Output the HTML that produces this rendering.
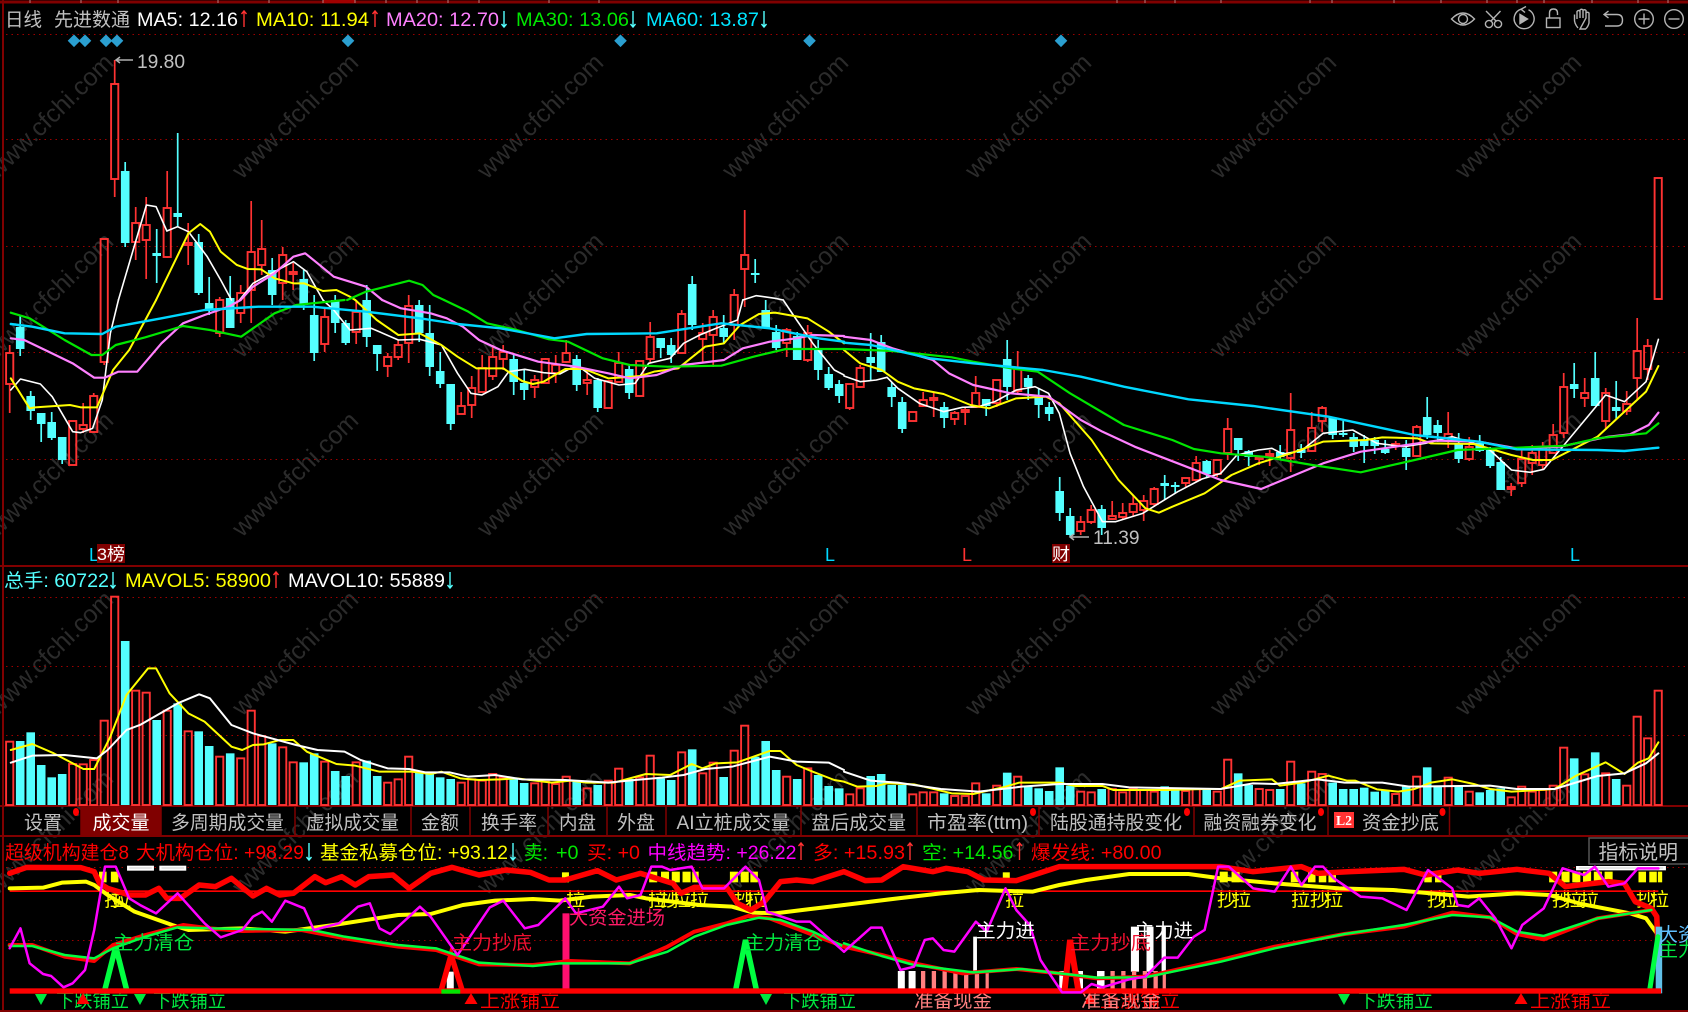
<!DOCTYPE html>
<html><head><meta charset="utf-8"><title>K线</title>
<style>
html,body{margin:0;padding:0;background:#000;width:1688px;height:1012px;overflow:hidden}
svg{display:block;position:absolute;left:0;top:0}
text{font-family:"Liberation Sans","Noto Sans CJK SC",sans-serif;font-size:19px}
.wm text{font-size:25px;fill:#2b2b2b}
polyline{fill:none;vector-effect:non-scaling-stroke;stroke-linejoin:round;stroke-linecap:round}
.w{stroke:#fff;stroke-width:1.6}.y{stroke:#ff0;stroke-width:2}.p{stroke:#ff80ff;stroke-width:2.2}.g{stroke:#00e600;stroke-width:2.2}.c{stroke:#00d8ff;stroke-width:2.4}
.icon{fill:none;stroke:#b4b4b4;stroke-width:1.4}
</style></head><body>
<svg id="s" width="1688" height="1012" viewBox="0 0 1688 1012" xmlns="http://www.w3.org/2000/svg">
<rect width="1688" height="1012" fill="#000"/>
<g class="wm" id="wm" transform="translate(5,5)">
<text transform="translate(-8,175) rotate(-44.5)">www.cfchi.com</text><text transform="translate(237,175) rotate(-44.5)">www.cfchi.com</text><text transform="translate(482,175) rotate(-44.5)">www.cfchi.com</text><text transform="translate(727,175) rotate(-44.5)">www.cfchi.com</text><text transform="translate(970,175) rotate(-44.5)">www.cfchi.com</text><text transform="translate(1215,175) rotate(-44.5)">www.cfchi.com</text><text transform="translate(1460,175) rotate(-44.5)">www.cfchi.com</text>
<text transform="translate(-8,354) rotate(-44.5)">www.cfchi.com</text><text transform="translate(237,354) rotate(-44.5)">www.cfchi.com</text><text transform="translate(482,354) rotate(-44.5)">www.cfchi.com</text><text transform="translate(727,354) rotate(-44.5)">www.cfchi.com</text><text transform="translate(970,354) rotate(-44.5)">www.cfchi.com</text><text transform="translate(1215,354) rotate(-44.5)">www.cfchi.com</text><text transform="translate(1460,354) rotate(-44.5)">www.cfchi.com</text>
<text transform="translate(-8,533) rotate(-44.5)">www.cfchi.com</text><text transform="translate(237,533) rotate(-44.5)">www.cfchi.com</text><text transform="translate(482,533) rotate(-44.5)">www.cfchi.com</text><text transform="translate(727,533) rotate(-44.5)">www.cfchi.com</text><text transform="translate(970,533) rotate(-44.5)">www.cfchi.com</text><text transform="translate(1215,533) rotate(-44.5)">www.cfchi.com</text><text transform="translate(1460,533) rotate(-44.5)">www.cfchi.com</text>
<text transform="translate(-8,712) rotate(-44.5)">www.cfchi.com</text><text transform="translate(237,712) rotate(-44.5)">www.cfchi.com</text><text transform="translate(482,712) rotate(-44.5)">www.cfchi.com</text><text transform="translate(727,712) rotate(-44.5)">www.cfchi.com</text><text transform="translate(970,712) rotate(-44.5)">www.cfchi.com</text><text transform="translate(1215,712) rotate(-44.5)">www.cfchi.com</text><text transform="translate(1460,712) rotate(-44.5)">www.cfchi.com</text>
<text transform="translate(-8,891) rotate(-44.5)">www.cfchi.com</text><text transform="translate(237,891) rotate(-44.5)">www.cfchi.com</text><text transform="translate(482,891) rotate(-44.5)">www.cfchi.com</text><text transform="translate(727,891) rotate(-44.5)">www.cfchi.com</text><text transform="translate(970,891) rotate(-44.5)">www.cfchi.com</text><text transform="translate(1215,891) rotate(-44.5)">www.cfchi.com</text><text transform="translate(1460,891) rotate(-44.5)">www.cfchi.com</text>
</g>
<g stroke="#9c0000" stroke-width="1" stroke-dasharray="1.5 4" fill="none">
<path d="M6 34.5H1688M6 139.5H1688M6 246.5H1688M6 352.5H1688M6 459.5H1688M6 597.5H1688M6 666.5H1688M6 735.5H1688M6 867.5H1688M6 940.5H1688"/>
</g>
<path d="M0 2H1688" stroke="#800000" stroke-width="3"/>
<rect x="323" y="0" width="32" height="3" fill="#a00000"/>
<path d="M30 0V3M81 0V3M118 0V3M218 0V3M269 0V3M323 0V3M355 0V3M386 0V3M417 0V3M448 0V3M479 0V3M549 0V3M599 0V3M1117 0V3M1145 0V3M1175 0V3M1221 0V3M1310 0V3M1332 0V3M1394 0V3M1441 0V3M1487 0V3M1517 0V3M1544 0V3M1592 0V3M1638 0V3M1668 0V3" stroke="#b08080" stroke-width="1"/>
<path d="M3 0V1012" stroke="#800000" stroke-width="2"/>
<path d="M0 566H1688M0 806H1688M0 836H1688M0 1011H1688" stroke="#800000" stroke-width="2"/>

<g id="candles"></g>

<g transform="translate(0,0) scale(.53827,.33333)">
<polyline class="w" points="220,900 272,615 290,620 310,693 330,680 350,695 385,770 410,840 430,900"/>
<polyline class="w" points="445,900 470,850 510,815 545,785 570,815 600,900"/>
<polyline class="y" points="290,900 350,700 372,672 390,695 410,755 440,795 460,807 485,808 510,835 545,850 565,850 600,873 625,870 650,890 660,900"/>
<polyline class="p" points="447,900 470,860 510,820 545,770 567,760 590,790 620,830 680,860 710,900"/>
<polyline class="g" points="645,900 680,875 760,842 785,855 805,885 825,900"/>
<polyline class="w" points="1380,900 1405,887 1440,895 1455,900"/>
</g>
<g transform="translate(0,300) scale(.53827,.33333)">
<polyline class="w" points="20,270 38,237 75,252 97,290 135,395 150,398 172,385 190,300 205,100 220,0"/>
<polyline class="w" points="600,0 620,30 650,90 690,85 740,120 780,118 820,135 850,220 875,280 895,285 925,260 945,215 975,208 1010,218 1040,222 1060,205 1080,205 1105,235 1150,255 1180,250 1205,190 1245,175 1270,130 1300,105 1330,85 1370,60 1380,0"/>
<polyline class="w" points="1455,0 1480,60 1510,130 1550,210 1568,225"/>
<polyline class="y" points="20,235 55,325 65,322 130,315 150,322 180,322 210,210 240,150 270,60 290,0"/>
<polyline class="y" points="660,0 700,60 740,105 780,100 820,135 850,170 885,205 935,205 970,243 990,252 1010,245 1050,207 1085,207 1130,235 1190,228 1215,215 1260,205 1310,140 1345,130 1375,75 1410,42 1440,38 1500,55 1540,95 1568,130"/>
<polyline class="p" points="20,115 45,120 90,155 135,190 175,233 195,233 220,215 255,215 300,130 340,70 380,45 425,20 447,0"/>
<polyline class="p" points="710,0 745,25 800,40 830,55 860,80 890,120 930,150 1000,185 1070,200 1130,220 1170,235 1220,225 1270,195 1345,180 1380,145 1430,125 1480,115 1510,105 1568,108"/>
<polyline class="g" points="20,38 55,55 120,120 170,165 190,165 215,135 270,112 340,78 390,90 448,110 510,40 550,15 640,0"/>
<polyline class="g" points="825,0 870,35 905,70 960,90 1020,118 1055,125 1120,175 1170,195 1240,200 1340,197 1400,170 1460,147 1568,147"/>
<polyline class="c" points="20,72 60,80 120,100 190,102 215,80 300,55 380,30 480,20 580,20 680,35 780,55 850,72 930,85 1030,115 1090,102 1220,100 1340,70 1430,85 1520,115 1568,125"/>
</g>
<g transform="translate(844,300) scale(.53827,.33333)">
<polyline class="w" points="0,228 30,245 60,240 80,232 100,265 140,310 185,335 220,322 250,320 280,305 320,270 355,260 380,280 400,340 420,460 445,560 480,665 505,665 555,640 570,625 620,575 665,537 700,520 730,465 770,450 795,445 815,462 850,452 890,400 945,390 990,430 1040,440 1080,430 1130,410 1170,430 1200,450 1240,510 1275,517 1300,508 1330,450 1415,285 1450,305 1490,245 1513,118"/>
<polyline class="y" points="0,150 30,190 70,210 100,245 130,265 185,282 235,315 270,325 320,295 375,290 400,310 460,420 510,540 560,625 585,638 610,620 670,580 720,525 770,490 830,460 890,425 970,420 1000,412 1065,415 1090,430 1170,432 1240,465 1280,480 1315,480 1400,410 1490,275 1513,198"/>
<polyline class="p" points="0,110 50,120 90,145 165,180 195,220 240,255 310,280 380,290 440,360 480,395 540,440 620,490 700,540 775,567 860,510 890,490 960,455 1100,422 1180,425 1250,445 1330,440 1420,410 1460,403 1495,375 1513,338"/>
<polyline class="g" points="0,147 90,153 200,172 240,185 310,205 360,215 420,280 520,375 610,420 650,447 700,460 780,470 870,495 960,517 1060,480 1140,450 1250,443 1340,437 1400,415 1490,400 1513,370"/>
<polyline class="c" points="0,128 50,135 160,175 240,190 370,210 440,230 520,260 640,298 760,318 900,350 1060,405 1180,425 1250,448 1400,450 1450,453 1513,443"/>
</g>
<g transform="translate(0,590) scale(.53827,.33333)">
<polyline class="y" points="20,480 60,462 100,490 155,537 175,537 205,440 235,315 275,235 290,235 315,310 350,370 380,395 430,470 450,480 470,465 490,463 520,450 545,450 570,485 625,522 660,527 705,545 765,545 800,552 820,545 855,565 890,570 930,568 960,565 1025,578 1060,572 1090,578 1140,578 1200,552 1245,555 1285,522 1305,535 1330,520 1370,517 1430,483 1450,483 1480,525 1510,545 1550,570 1568,575"/>
<polyline class="w" style="stroke-width:2" points="20,518 60,497 120,495 180,505 200,480 235,420 260,405 330,340 370,313 390,325 430,405 470,430 550,465 590,480 640,485 670,510 720,535 760,537 790,547 835,547 870,560 920,555 970,568 1050,570 1130,578 1180,570 1230,563 1270,555 1310,537 1360,530 1430,500 1480,515 1540,518 1568,540"/>
</g>
<g transform="translate(844,590) scale(.53827,.33333)">
<polyline class="y" points="0,575 25,590 60,588 80,580 130,583 200,610 240,612 300,590 325,578 400,578 430,588 480,588 500,600 600,600 670,597 700,597 735,572 795,568 810,587 850,578 900,557 935,572 950,572 990,598 1030,605 1060,597 1090,578 1130,568 1170,582 1200,597 1240,605 1320,597 1360,557 1415,517 1450,552 1475,518 1495,505 1513,457"/>
<polyline class="w" style="stroke-width:2" points="0,545 50,572 100,578 180,597 250,605 330,590 400,582 480,582 530,592 700,597 760,580 800,582 880,568 930,578 1000,578 1050,590 1200,587 1250,597 1320,597 1400,558 1450,550 1490,520 1513,490"/>
</g>

<!-- diamonds -->
<g fill="#2b9fd0">
<path d="M74 34.5l6.3 6.3-6.3 6.3-6.3-6.3zM85 34.5l6.3 6.3-6.3 6.3-6.3-6.3zM106 34.5l6.3 6.3-6.3 6.3-6.3-6.3zM117 34.5l6.3 6.3-6.3 6.3-6.3-6.3zM348 34.5l6.3 6.3-6.3 6.3-6.3-6.3zM620.5 34.5l6.3 6.3-6.3 6.3-6.3-6.3zM809.5 34.5l6.3 6.3-6.3 6.3-6.3-6.3zM1061 34.5l6.3 6.3-6.3 6.3-6.3-6.3z"/>
</g>

<!-- header -->
<text x="5" y="26" textLength="37" lengthAdjust="spacingAndGlyphs" fill="#c0c0c0">日线</text>
<text x="54" y="26" textLength="76" lengthAdjust="spacingAndGlyphs" fill="#c0c0c0">先进数通</text>
<text x="137" y="26" textLength="101" lengthAdjust="spacingAndGlyphs" fill="#fff">MA5: 12.16</text>
<text x="256" y="26" textLength="113" lengthAdjust="spacingAndGlyphs" fill="#ff0">MA10: 11.94</text>
<text x="386" y="26" textLength="113" lengthAdjust="spacingAndGlyphs" fill="#ff80ff">MA20: 12.70</text>
<text x="516" y="26" textLength="113" lengthAdjust="spacingAndGlyphs" fill="#00e600">MA30: 13.06</text>
<text x="646" y="26" textLength="113" lengthAdjust="spacingAndGlyphs" fill="#00e5ff">MA60: 13.87</text>
<g fill="none" stroke-width="1.4">
<path d="M244 27V11M241.5 14L244 11L246.5 14M375 27V11M372.5 14L375 11L377.5 14" stroke="#ff3232"/>
<path d="M504 11V27M501.5 24L504 27L506.5 24M633 11V27M630.5 24L633 27L635.5 24M764 11V27M761.5 24L764 27L766.5 24" stroke="#54ffff"/>
</g>

<!-- price labels -->
<path d="M116 60H133M120 57L116 60L120 63" stroke="#b0b0b0" stroke-width="1.5" fill="none"/>
<text x="137" y="68" textLength="48" lengthAdjust="spacingAndGlyphs" fill="#c0c0c0">19.80</text>
<path d="M1070 537H1089M1074 534L1070 537L1074 540" stroke="#b0b0b0" stroke-width="1.5" fill="none"/>
<text x="1093" y="544" textLength="46.5" lengthAdjust="spacingAndGlyphs" fill="#c0c0c0">11.39</text>
<text x="89" y="561" fill="#00d8ff" style="font-size:18px" textLength="10" lengthAdjust="spacingAndGlyphs">L</text>
<rect x="97" y="544" width="28" height="19" fill="#800000"/>
<text x="97" y="560" fill="#fff" style="font-size:17px" textLength="28" lengthAdjust="spacingAndGlyphs">3榜</text>
<text x="825" y="561" fill="#00d8ff" style="font-size:18px" textLength="10" lengthAdjust="spacingAndGlyphs">L</text>
<text x="962" y="561" fill="#ff3232" style="font-size:18px" textLength="10" lengthAdjust="spacingAndGlyphs">L</text>
<rect x="1052" y="544" width="18" height="19" fill="#800000"/>
<text x="1052" y="560" fill="#fff" style="font-size:17px" textLength="18" lengthAdjust="spacingAndGlyphs">财</text>
<text x="1570" y="561" fill="#00d8ff" style="font-size:18px" textLength="10" lengthAdjust="spacingAndGlyphs">L</text>

<!-- vol title -->
<text x="4" y="587" textLength="105" lengthAdjust="spacingAndGlyphs" fill="#54ffff">总手: 60722</text>
<text x="125" y="587" textLength="146" lengthAdjust="spacingAndGlyphs" fill="#ff0">MAVOL5: 58900</text>
<text x="288" y="587" textLength="157" lengthAdjust="spacingAndGlyphs" fill="#fff">MAVOL10: 55889</text>
<g fill="none" stroke-width="1.4">
<path d="M113 572V588M110.5 585L113 588L115.5 585M450 572V588M447.5 585L450 588L452.5 585" stroke="#54ffff"/>
<path d="M276 588V572M273.5 575L276 572L278.5 575" stroke="#ff3232"/>
</g>

<!-- icons -->
<g class="icon">
<path d="M1451.5 19Q1463 7 1474.5 19Q1463 31 1451.5 19Z"/><circle cx="1463" cy="19" r="4.5"/>
<circle cx="1489" cy="24" r="3.6"/><circle cx="1498" cy="24" r="3.6"/><path d="M1486 11L1496.5 21.5M1500.5 11L1490.5 21.5"/>
<path d="M1528.5 9.7A10 10 0 1 1 1521 9.2M1521 9.2L1526 6.5M1521 9.2L1525 12.5"/><path d="M1520 14.5L1527.5 19L1520 23.5Z" fill="#b4b4b4"/>
<rect x="1546.5" y="18" width="13.5" height="9.5"/><path d="M1549.5 18V13Q1549.5 9 1553.5 9Q1557.5 9 1557.5 13V15"/>
<path d="M1578 28Q1574 23 1574.5 19V14.5M1577 19V11.5Q1578.5 9.5 1580 11.5V18M1580 18V10Q1581.5 8.5 1583 10V18M1583 18V10.5Q1584.5 9 1586 10.5V18M1586 18V13Q1587.5 11.5 1589 13V23Q1588 27 1585.5 29H1580Z"/>
<path d="M1604 14.5H1617Q1622.5 14.5 1622.5 20Q1622.5 26 1617 26H1605M1608.5 11L1604 14.5L1608.5 18"/>
<circle cx="1644" cy="19" r="9.3"/><path d="M1638.5 19H1649.5M1644 13.5V24.5"/>
<circle cx="1674" cy="19" r="9.3"/><path d="M1668.5 19H1679.5"/>
</g>

<!-- tabs -->
<rect x="81" y="807" width="80" height="29" fill="#800000"/>
<path d="M81 807V836M161 807V836M295 807V836M411 807V836M470 807V836M548 807V836M607 807V836M666 807V836M801 807V836M917 807V836M1039 807V836M1194 807V836M1328 807V836M1449.5 807V836" stroke="#800000" stroke-width="1.5"/>
<g fill="#c0c0c0">
<text x="24" y="829" textLength="38" lengthAdjust="spacingAndGlyphs">设置</text>
<text x="92.5" y="829" textLength="57" lengthAdjust="spacingAndGlyphs" fill="#fff">成交量</text>
<text x="171" y="829" textLength="113" lengthAdjust="spacingAndGlyphs">多周期成交量</text>
<text x="306" y="829" textLength="93" lengthAdjust="spacingAndGlyphs">虚拟成交量</text>
<text x="421" y="829" textLength="38" lengthAdjust="spacingAndGlyphs">金额</text>
<text x="481" y="829" textLength="56" lengthAdjust="spacingAndGlyphs">换手率</text>
<text x="559" y="829" textLength="37" lengthAdjust="spacingAndGlyphs">内盘</text>
<text x="617" y="829" textLength="38" lengthAdjust="spacingAndGlyphs">外盘</text>
<text x="676.5" y="829" textLength="113.5" lengthAdjust="spacingAndGlyphs">AI立桩成交量</text>
<text x="811.5" y="829" textLength="94.5" lengthAdjust="spacingAndGlyphs">盘后成交量</text>
<text x="927" y="829" textLength="101" lengthAdjust="spacingAndGlyphs">市盈率(ttm)</text>
<text x="1050" y="829" textLength="132" lengthAdjust="spacingAndGlyphs">陆股通持股变化</text>
<text x="1203.5" y="829" textLength="113" lengthAdjust="spacingAndGlyphs">融资融券变化</text>
<text x="1362" y="829" textLength="77" lengthAdjust="spacingAndGlyphs">资金抄底</text>
</g>
<rect x="1334" y="812" width="20" height="16" fill="#f33"/>
<text x="1336" y="825" fill="#fff" style="font-size:14px;font-family:'Liberation Serif',serif;font-weight:bold" textLength="16" lengthAdjust="spacingAndGlyphs">L2</text>
<g fill="#f00"><ellipse cx="76" cy="812" rx="3" ry="4"/><ellipse cx="1033" cy="812" rx="3" ry="4"/><ellipse cx="1187" cy="812" rx="3" ry="4"/><ellipse cx="1321" cy="812" rx="3" ry="4"/><ellipse cx="1442.5" cy="812" rx="3" ry="4"/></g>

<!-- yellow labels sit under the solid red line -->
<g fill="#ff0" style="font-size:19px">
<text x="104" y="906">拉</text><text x="112" y="906">拉</text>
<text x="566" y="906">拉</text>
<text x="648" y="906">拉</text><text x="660" y="906">抄</text><text x="672" y="906">拉</text><text x="690" y="906">拉</text>
<text x="734" y="906">抄</text><text x="746" y="906">拉</text>
<text x="1005" y="906">拉</text>
<text x="1217" y="906">抄</text><text x="1232" y="906">拉</text>
<text x="1291" y="906">拉</text><text x="1310" y="906">抄</text><text x="1324" y="906">拉</text>
<text x="1427" y="906">抄</text><text x="1440" y="906">拉</text>
<text x="1552" y="906">抄</text><text x="1564" y="906">拉</text><text x="1580" y="906">拉</text>
<text x="1636" y="906">抄</text><text x="1650" y="906">拉</text>
</g>
<!-- bottom labels sit under the thick red line -->
<g fill="#00e640">
<text x="56" y="1007" textLength="73" lengthAdjust="spacingAndGlyphs">下跌铺立</text>
<text x="153" y="1007" textLength="73" lengthAdjust="spacingAndGlyphs">下跌铺立</text>
<text x="783" y="1007" textLength="73" lengthAdjust="spacingAndGlyphs">下跌铺立</text>
<text x="1358" y="1007" textLength="75" lengthAdjust="spacingAndGlyphs">下跌铺立</text>
<path d="M35 994h12l-6 11zM134 994h12l-6 11zM760 994h12l-6 11zM1338 994h12l-6 11z"/>
</g>
<g fill="#f00">
<text x="480" y="1007" textLength="80" lengthAdjust="spacingAndGlyphs">上涨铺立</text>
<text x="1100" y="1007" textLength="80" lengthAdjust="spacingAndGlyphs">上涨铺立</text>
<text x="1530" y="1007" textLength="81" lengthAdjust="spacingAndGlyphs">上涨铺立</text>
<path d="M83 993l6.5 11h-13zM471 993l6.5 11h-13zM1090 993l6.5 11h-13zM1521 993l6.5 11h-13z"/>
</g>
<g fill="#ff8080">
<text x="914" y="1007" textLength="78" lengthAdjust="spacingAndGlyphs">准备现金</text>
<text x="1081" y="1007" textLength="80" lengthAdjust="spacingAndGlyphs">准备现金</text>
</g>

<!-- indicator panel, left -->
<g transform="translate(0,830) scale(.53827,.33333)">
<g fill="#ff0"><rect x="184" y="125" width="14" height="32"/><rect x="206" y="125" width="14" height="32"/><rect x="1044" y="127" width="13" height="30"/><rect x="1206" y="125" width="15" height="32"/><rect x="1228" y="125" width="15" height="32"/><rect x="1248" y="125" width="15" height="32"/><rect x="1268" y="125" width="15" height="32"/><rect x="1286" y="125" width="12" height="32"/><rect x="1356" y="125" width="15" height="32"/><rect x="1376" y="125" width="15" height="32"/><rect x="1394" y="125" width="14" height="32"/></g>
<rect x="236" y="107" width="50" height="15" fill="#fff"/><rect x="296" y="107" width="50" height="15" fill="#fff"/>
<path d="M240 114H282M300 114H342" stroke="#333" stroke-width="1"/>
<rect x="18" y="181" width="1550" height="5" fill="#f00"/>
<polyline points="18,175 80,173 115,158 160,155 175,165 200,195 250,245 320,285 350,300 450,295 530,305 620,285 700,265 740,255 800,252 860,225 920,212 990,207 1040,212 1100,200 1170,195 1200,205 1300,225 1360,230 1400,248 1440,250 1500,238 1568,225" style="stroke:#ff0;stroke-width:4"/>
<polyline points="18,130 50,112 150,113 175,125 185,160 200,175 240,195 270,195 295,175 310,205 335,205 370,165 400,170 430,145 470,198 495,175 520,195 545,190 585,140 605,158 635,140 660,165 685,140 730,135 760,175 800,130 840,112 890,135 940,120 985,127 1020,150 1050,150 1110,122 1145,150 1190,130 1250,160 1265,190 1290,172 1350,172 1370,220 1395,240 1420,215 1450,155 1480,150 1510,155 1568,125" style="stroke:#f00;stroke-width:5.5"/>
<rect x="1045" y="250" width="13" height="228" fill="#ff0f6f"/>
<polyline points="195,478 215,350 235,478" style="stroke:#00ff40;stroke-width:5.5;stroke-linejoin:miter"/>
<polyline points="1367,478 1385,330 1405,478" style="stroke:#00ff40;stroke-width:5.5;stroke-linejoin:miter"/>
<rect x="830" y="425" width="13" height="55" fill="#fff"/>
<polyline points="820,478 838,375 858,478" style="stroke:#f00;stroke-width:5.5;stroke-linejoin:miter"/>
<polyline points="18,345 60,345 120,380 175,393 210,345 270,315 340,285 390,295 450,303 560,300 640,325 740,350 810,360 890,403 990,405 1060,393 1170,400 1240,350 1290,305 1350,280 1390,258 1430,265 1568,350" style="stroke:#f00;stroke-width:4"/>
<polyline points="18,348 60,348 120,375 175,385 210,355 270,320 330,292 390,295 580,300 640,320 740,345 810,355 890,398 990,408 1040,400 1170,400 1240,365 1290,320 1350,285 1410,263 1450,270 1510,305 1568,350" style="stroke:#00ff40;stroke-width:2.5"/>
<polyline points="18,355 38,295 55,400 80,432 95,438 118,472 135,460 158,420 175,300 195,110 215,110 240,205 260,225 290,250 330,190 380,280 410,322 450,300 470,260 487,245 505,275 530,212 565,235 583,300 630,280 665,230 687,220 705,295 725,312 780,230 800,260 850,375 910,232 935,212 975,295 1000,285 1050,205 1070,250 1120,230 1150,170 1165,205 1190,195 1210,110 1230,110 1245,120 1285,110 1305,175 1345,175 1385,110 1410,150 1425,245 1480,275 1505,275 1568,365" style="stroke:#ff00ff;stroke-width:2.5"/>
<rect x="18" y="475" width="1550" height="16" fill="#f00"/>
<rect x="820" y="478" width="35" height="13" fill="#00e600"/>
</g>
<!-- indicator panel, right -->
<g transform="translate(844,830) scale(.53827,.33333)">
<g fill="#ff0"><rect x="295" y="127" width="13" height="30"/><rect x="698" y="125" width="15" height="32"/><rect x="720" y="125" width="15" height="32"/><rect x="830" y="125" width="14" height="32"/><rect x="862" y="125" width="14" height="32"/><rect x="882" y="125" width="14" height="32"/><rect x="900" y="125" width="14" height="32"/><rect x="1078" y="125" width="14" height="32"/><rect x="1098" y="125" width="12" height="32"/><rect x="1310" y="125" width="15" height="32"/><rect x="1333" y="125" width="15" height="32"/><rect x="1353" y="125" width="15" height="32"/><rect x="1373" y="125" width="15" height="32"/><rect x="1393" y="125" width="15" height="32"/><rect x="1413" y="125" width="15" height="32"/><rect x="1476" y="125" width="14" height="32"/><rect x="1496" y="125" width="14" height="32"/><rect x="1512" y="125" width="8" height="32"/></g>
<rect x="1360" y="108" width="167" height="13" fill="#fff"/><path d="M1365 114H1522" stroke="#333" stroke-width="1"/>
<rect x="0" y="181" width="1513" height="5" fill="#f00"/>
<polyline points="0,225 100,205 180,190 250,180 350,185 400,165 450,150 530,132 640,132 700,145 800,160 920,175 1020,180 1160,200 1250,190 1310,195 1370,222 1460,250 1490,265 1510,310" style="stroke:#ff0;stroke-width:4"/>
<polyline points="0,125 40,152 70,150 110,110 165,125 190,115 230,125 260,150 320,152 400,110 700,110 760,125 850,110 880,130 940,125 1040,118 1080,135 1140,120 1180,130 1250,118 1310,130 1340,170 1420,155 1450,160 1470,215 1500,235 1510,260 1512,340" style="stroke:#f00;stroke-width:5.5"/>
<g fill="#fff"><rect x="100" y="423" width="13" height="55"/><rect x="120" y="423" width="13" height="55"/><rect x="240" y="320" width="7" height="105"/><rect x="400" y="423" width="14" height="55"/><rect x="430" y="423" width="14" height="55"/><rect x="470" y="423" width="14" height="55"/><rect x="533" y="290" width="15" height="135"/><rect x="562" y="290" width="13" height="135"/><rect x="590" y="290" width="8" height="135"/></g>
<g fill="#ff8080"><rect x="143" y="423" width="8" height="55"/><rect x="163" y="423" width="8" height="55"/><rect x="183" y="423" width="8" height="55"/><rect x="203" y="423" width="8" height="55"/><rect x="223" y="423" width="8" height="55"/><rect x="243" y="423" width="8" height="55"/><rect x="263" y="423" width="6" height="55"/><rect x="495" y="423" width="8" height="55"/><rect x="515" y="423" width="8" height="55"/><rect x="535" y="423" width="8" height="55"/><rect x="555" y="423" width="8" height="55"/><rect x="575" y="423" width="8" height="55"/><rect x="592" y="423" width="6" height="55"/></g>
<polyline points="410,478 420,330 435,478" style="stroke:#f00;stroke-width:6;stroke-linejoin:miter"/>
<rect x="1508" y="290" width="12" height="200" fill="#60c0e8"/>
<polyline points="1497,478 1512,320" style="stroke:#00ff40;stroke-width:5"/>
<polyline points="0,350 70,375 130,400 220,430 320,417 400,430 470,445 560,440 700,390 800,350 930,312 1040,290 1130,248 1200,262 1250,312 1300,328 1400,265 1500,240" style="stroke:#f00;stroke-width:4"/>
<polyline points="0,340 70,378 130,405 240,427 330,417 470,443 560,442 700,395 800,355 930,312 1040,285 1130,255 1200,262 1250,305 1300,318 1400,265 1500,240" style="stroke:#00ff40;stroke-width:2.5"/>
<rect x="0" y="475" width="1518" height="16" fill="#f00"/>
<polyline points="0,365 50,293 70,293 105,420 130,410 150,330 165,325 185,360 205,365 245,275 265,305 300,175 320,240 345,285 365,390 405,487 440,487 460,462 480,472 530,448 560,440 595,383 620,383 650,320 670,300 695,110 715,110 760,175 800,185 830,110 850,165 875,110 890,110 910,145 960,200 1000,205 1045,240 1085,120 1130,175 1140,225 1160,230 1180,205 1210,265 1240,355 1260,285 1300,235 1335,115 1375,135 1395,110 1420,170 1450,160 1475,115 1513,115" style="stroke:#ff00ff;stroke-width:2.5"/>
</g>

<!-- indicator title -->
<text x="5" y="859" textLength="124" lengthAdjust="spacingAndGlyphs" fill="#f00">超级机构建仓8</text>
<text x="136" y="859" textLength="168" lengthAdjust="spacingAndGlyphs" fill="#f00">大机构仓位: +98.29</text>
<text x="320" y="859" textLength="188" lengthAdjust="spacingAndGlyphs" fill="#ff0">基金私募仓位: +93.12</text>
<text x="524" y="859" textLength="24" lengthAdjust="spacingAndGlyphs" fill="#00e600">卖:</text>
<text x="556" y="859" textLength="22.5" lengthAdjust="spacingAndGlyphs" fill="#00e600">+0</text>
<text x="587" y="859" textLength="53" lengthAdjust="spacingAndGlyphs" fill="#f00">买: +0</text>
<text x="647.5" y="859" textLength="149" lengthAdjust="spacingAndGlyphs" fill="#ff00ff">中线趋势: +26.22</text>
<text x="813" y="859" textLength="92" lengthAdjust="spacingAndGlyphs" fill="#f00">多: +15.93</text>
<text x="922" y="859" textLength="91.5" lengthAdjust="spacingAndGlyphs" fill="#00e600">空: +14.56</text>
<text x="1031" y="859" textLength="130.5" lengthAdjust="spacingAndGlyphs" fill="#f00">爆发线: +80.00</text>
<g fill="none" stroke-width="1.4">
<path d="M309 843V860M306.5 857L309 860L311.5 857M513 843V860M510.5 857L513 860L515.5 857" stroke="#54ffff"/>
<path d="M801 860V843M798.5 846L801 843L803.5 846M910 860V843M907.5 846L910 843L912.5 846M1019.5 860V843M1017 846L1019.5 843L1022 846" stroke="#ff3232"/>
</g>
<path d="M1688 838H1589V864H1688" fill="#000" stroke="#555" stroke-width="1.5"/>
<text x="1598.5" y="859" textLength="79.5" lengthAdjust="spacingAndGlyphs" fill="#c0c0c0" style="font-size:20px">指标说明</text>

<!-- overlays inside indicator -->
<text x="113" y="949" textLength="81" lengthAdjust="spacingAndGlyphs" fill="#00e640">主力清仓</text>
<text x="745" y="949" textLength="78" lengthAdjust="spacingAndGlyphs" fill="#00e640">主力清仓</text>
<text x="452" y="949" textLength="80" lengthAdjust="spacingAndGlyphs" fill="#f01030">主力抄底</text>
<text x="1070" y="949" textLength="81" lengthAdjust="spacingAndGlyphs" fill="#f01030">主力抄底</text>
<text x="569" y="924" textLength="96" lengthAdjust="spacingAndGlyphs" fill="#ff1a66">大资金进场</text>
<text x="976" y="937" textLength="59" lengthAdjust="spacingAndGlyphs" fill="#fff">主力进</text>
<text x="1135" y="937" textLength="58" lengthAdjust="spacingAndGlyphs" fill="#fff">主力进</text>
<text x="1659" y="941" fill="#60c0ff">大资</text>
<text x="1659" y="956" fill="#00e640">主力</text>
</svg>
<script>
var C=[[1,353,384,345,413],[0,327,349,315,356],[0,396,411,391,420],[0,413,424,413,442],[0,422,438,412,440],[0,437,460,437,464],[1,421,465,421,465],[1,425,429,403,433],[1,396,432,393,433],[1,239,362,239,365],
[1,84,179,60,197],[0,171,243,162,247],[1,223,242,207,260],[1,225,240,197,279],[0,253,256,229,283],[1,208,257,171,258],[0,213,217,133,227],[1,243,245,223,265],[0,242,293,234,295],[0,303,310,277,315],
[1,300,333,297,337],[0,298,328,276,328],[1,293,313,285,323],[1,252,290,201,323],[1,249,265,220,275],[0,270,295,258,305],[1,255,283,247,300],[1,272,274,263,290],[0,279,305,270,310],[0,315,353,295,361],
[1,317,344,307,352],[0,300,323,295,333],[0,323,343,320,345],[1,312,332,300,344],[0,300,337,285,347],[0,345,354,345,371],[1,357,366,353,377],[1,345,357,340,360],[1,306,343,295,363],[0,305,333,300,342],
[0,333,367,305,376],[0,371,384,352,388],[0,384,424,384,430],[1,406,414,392,414],[1,388,405,376,418],[1,368,392,355,392],[1,357,376,345,380],[1,352,359,345,370],[0,359,382,355,395],[0,383,390,370,400],
[1,380,387,375,398],[1,359,383,358,383],[1,365,373,355,383],[1,353,362,340,363],[0,359,385,355,391],[1,380,383,370,395],[0,380,408,378,412],[1,381,408,381,408],[1,363,382,352,382],[0,369,393,365,399],
[1,361,396,361,397],[1,337,359,322,363],[0,338,348,338,358],[0,345,355,338,363],[1,314,353,310,353],[0,284,325,276,330],[1,333,339,323,363],[1,317,335,310,367],[0,328,337,315,343],[1,295,325,289,340],
[1,255,269,210,307],[0,273,275,259,283],[0,310,328,300,328],[0,332,348,325,350],[1,330,343,328,357],[0,336,360,332,360],[1,333,360,325,362],[0,350,370,340,380],[0,374,388,367,390],[0,384,396,380,403],
[1,384,408,384,410],[1,368,387,365,388],[0,357,363,333,380],[0,342,372,335,372],[0,387,397,382,407],[0,402,429,397,433],[1,412,421,412,421],[1,400,406,392,407],[1,398,400,393,417],[0,407,418,402,428],
[1,413,419,411,425],[1,410,412,407,425],[1,393,407,376,408],[0,399,406,399,416],[1,380,403,380,407],[0,359,387,340,400],[1,368,391,351,395],[0,378,387,375,400],[0,397,405,388,418],[0,407,414,402,421],
[0,491,513,477,521],[0,516,535,508,537],[1,522,531,516,535],[1,510,522,505,524],[0,509,528,505,535],[1,516,519,501,520],[1,513,517,503,520],[1,504,512,495,517],[1,501,510,495,521],[1,489,504,487,507],
[0,483,486,475,500],[0,485,487,482,493],[1,478,483,478,488],[1,463,480,456,482],[0,461,474,460,477],[1,460,474,460,477],[1,429,453,418,460],[0,438,450,438,461],[0,451,457,450,466],[1,457,459,457,465],
[1,454,456,450,466],[0,452,457,445,460],[1,430,458,393,472],[0,449,453,444,458],[1,428,451,412,452],[1,408,421,406,432],[0,418,435,417,439],[0,433,435,421,437],[0,437,447,433,452],[0,440,446,435,463],
[0,440,446,437,454],[0,449,453,440,454],[1,444,446,441,450],[0,448,457,440,470],[1,427,456,425,457],[0,417,435,397,439],[0,425,433,420,442],[1,434,438,412,448],[0,443,459,433,463],[1,447,459,437,461],
[0,443,451,435,452],[0,450,466,447,468],[0,462,490,457,490],[1,487,489,483,496],[1,459,483,450,487],[1,453,463,445,475],[1,447,465,442,470],[1,435,453,424,453],[1,387,433,373,438],[0,384,389,363,398],
[1,393,398,378,407],[0,378,406,352,406],[1,393,421,388,430],[0,407,411,381,419],[1,404,411,391,415],[1,351,378,318,400],[1,346,369,339,380],[1,178,299,178,300]];
var VL=[[1,455],[0,453],[0,427],[0,525],[0,562],[0,552],[1,522],[1,523],[1,510],[1,392],[1,20],[0,153],[1,302],[1,308],[0,390],[1,362],[0,340],[1,424],[0,424],[0,468],[1,500],[0,490],[1,505],[1,362],[1,438],[0,460],[1,472],[1,517],[0,517],[0,490],[1,515],[0,543],[0,558],[1,517],[0,512],[0,558],[1,578],[1,568],[1,500],[0,547],[0,550],[0,562],[0,567],[1,578],[1,568],[1,572],[1,552],[1,562],[0,567],[0,579],[1,580],[1,575],[1,582],[1,560],[0,575],[1,595],[0,585],[1,572],[1,536],[0,567],[1,562],[1,497],[0,565],[0,570],[1,487],[0,478],[1,550],[1,518],[0,561],[1,482],[1,407],[0,500],[0,453],[0,540],[1,560],[0,567],[1,535],[0,555],[0,588],[0,595],
[1,613],[1,595],[0,558],[0,552],[0,585],[0,585],[1,613],[1,607],[1,607],[0,610],[1,618],[1,618],[1,580],[0,610],[1,587],[0,548],[1,560],[0,587],[0,595],[0,603],[0,532],[0,587],[1,605],[1,607],[0,597],[1,597],[1,607],[1,595],[1,600],[1,605],[0,589],[0,595],[1,603],[1,597],[0,600],[1,605],[1,509],[0,550],[0,585],[1,597],[1,600],[0,597],[1,515],[0,580],[1,545],[1,552],[0,578],[0,597],[0,597],[0,593],[0,605],[0,600],[1,612],[0,587],[1,560],[0,532],[0,590],[1,563],[0,588],[1,605],[0,607],[0,600],[0,595],[1,622],[1,590],[1,605],[1,600],[1,587],[1,473],[0,505],[1,553],[0,487],[1,550],[0,567],[1,587],[1,380],[1,445],[1,302]];
var R='#ff3232',B='#54ffff',h='';
C.forEach(function(d,i){var x=9.7+10.5*i,col=d[0]?R:B;
 if(d[0]){h+='<path d="M'+x+' '+d[3]+'V'+d[1]+'M'+x+' '+d[2]+'V'+d[4]+'" stroke="'+col+'" stroke-width="1.7" fill="none"/><rect x="'+(x-3.6)+'" y="'+d[1]+'" width="7.2" height="'+(d[2]-d[1])+'" fill="none" stroke="'+col+'" stroke-width="1.9"/>';}
 else{h+='<path d="M'+x+' '+d[3]+'V'+d[4]+'" stroke="'+col+'" stroke-width="1.7" fill="none"/><rect x="'+(x-4.3)+'" y="'+d[1]+'" width="8.6" height="'+(d[2]-d[1])+'" fill="'+col+'"/>';}
});
VL.forEach(function(d,i){var x=9.7+10.5*i,t=590+d[1]/3;
 if(d[0]){h+='<rect x="'+(x-3.6)+'" y="'+t+'" width="7.2" height="'+(805-t)+'" fill="none" stroke="'+R+'" stroke-width="1.9"/>';}
 else{h+='<rect x="'+(x-4.3)+'" y="'+t+'" width="8.6" height="'+(805-t)+'" fill="'+B+'"/>';}
});
document.getElementById('candles').innerHTML=h;
</script>
</body></html>
